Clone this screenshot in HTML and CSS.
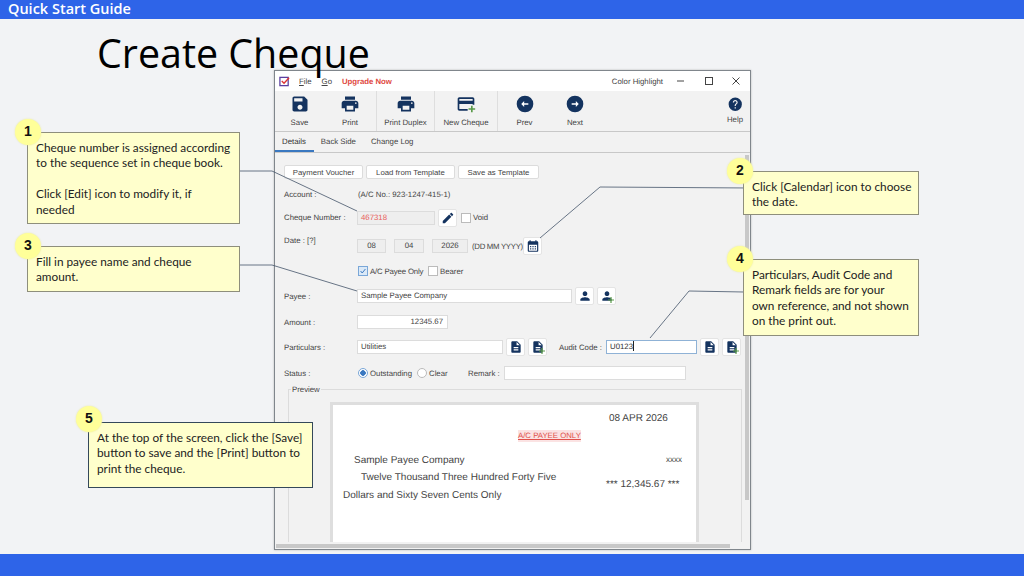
FILE: index.html
```html
<!DOCTYPE html>
<html lang="en">

<head>
    <meta charset="UTF-8">
    <title>Create Cheque</title>
    <link rel="stylesheet" href="styles.css">
</head>

<body>
<svg class="defs" width="0" height="0">
  <symbol id="i-save" viewBox="0 0 24 24"><path d="M17 3H5c-1.11 0-2 .9-2 2v14c0 1.1.89 2 2 2h14c1.1 0 2-.9 2-2V7l-4-4zm-5 16c-1.66 0-3-1.34-3-3s1.34-3 3-3 3 1.34 3 3-1.34 3-3 3zm3-10H5V5h10v4z"/></symbol>
  <symbol id="i-print" viewBox="0 0 24 24"><path d="M19 8H5c-1.66 0-3 1.34-3 3v6h4v4h12v-4h4v-6c0-1.66-1.34-3-3-3zm-3 11H8v-5h8v5zm3-7c-.55 0-1-.45-1-1s.45-1 1-1 1 .45 1 1-.45 1-1 1zm-1-9H6v4h12V3z"/></symbol>
  <symbol id="i-edit" viewBox="0 0 24 24"><path d="M3 17.25V21h3.75L17.81 9.94l-3.75-3.75L3 17.25zM20.71 7.04c.39-.39.39-1.02 0-1.41l-2.34-2.34c-.39-.39-1.02-.39-1.41 0l-1.83 1.83 3.75 3.75 1.83-1.83z"/></symbol>
  <symbol id="i-cal" viewBox="0 0 24 24"><path d="M19 4h-1V2h-2v2H8V2H6v2H5c-1.1 0-2 .9-2 2v14c0 1.1.9 2 2 2h14c1.1 0 2-.9 2-2V6c0-1.1-.9-2-2-2zm0 16H5V10h14v10zM7 12h2v2H7zm4 0h2v2h-2zm4 0h2v2h-2zm-8 4h2v2H7zm4 0h2v2h-2zm4 0h2v2h-2z"/></symbol>
  <symbol id="i-person" viewBox="0 0 24 24"><path d="M12 12c2.21 0 4-1.79 4-4s-1.79-4-4-4-4 1.79-4 4 1.79 4 4 4zm0 2c-2.67 0-8 1.34-8 4v2h16v-2c0-2.66-5.33-4-8-4z"/></symbol>
  <symbol id="i-doc" viewBox="0 0 24 24"><path d="M14 2H6c-1.1 0-1.99.9-1.99 2L4 20c0 1.1.89 2 1.99 2H18c1.1 0 2-.9 2-2V8l-6-6zm2 16H8v-2h8v2zm0-4H8v-2h8v2zm-3-5V3.5L18.5 9H13z"/></symbol>
  <symbol id="i-plus" viewBox="0 0 10 10"><path fill="#5a9a4a" d="M4 0h2v4h4v2H6v4H4V6H0V4h4z"/></symbol>
</svg>

<div class="slide">
  <div class="topBar">Quick Start Guide</div>
  <h1 class="slideTitle">Create Cheque</h1>

  <div class="window">
    <div class="titleBar">
      <svg class="logo" viewBox="0 0 12 12"><rect x="1" y="1.5" width="9" height="9" fill="none" stroke="#5b3fa0" stroke-width="1.4"/><path d="M3 5.5l2.5 2.5L11 2" fill="none" stroke="#d33" stroke-width="1.5"/></svg>
      <span class="menu"><u>F</u>ile</span>
      <span class="menu"><u>G</u>o</span>
      <span class="upgrade">Upgrade Now</span>
      <span class="highlight">Color Highlight</span>
      <svg class="winBtn" viewBox="0 0 10 10"><path d="M1 5h7" stroke="#444" fill="none"/></svg>
      <svg class="winBtn" viewBox="0 0 10 10"><rect x="1.5" y="1.5" width="7" height="7" stroke="#444" fill="none"/></svg>
      <svg class="winBtn" viewBox="0 0 10 10"><path d="M1.5 1.5l7 7M8.5 1.5l-7 7" stroke="#444" fill="none"/></svg>
    </div>

    <div class="toolbar">
      <div class="tool toolSave"><svg class="toolIcon"><use href="#i-save"/></svg>Save</div>
      <div class="tool toolPrint"><svg class="toolIcon"><use href="#i-print"/></svg>Print</div>
      <div class="tool toolDuplex"><svg class="toolIcon"><use href="#i-print"/></svg>Print Duplex</div>
      <div class="tool toolNew">
        <svg class="toolIcon" viewBox="0 0 24 24"><path d="M20 4H4c-1.11 0-1.99.89-1.99 2L2 18c0 1.11.89 2 2 2h10v-2H4v-6h16v1h2V6c0-1.11-.89-2-2-2zm0 4H4V6h16v2z"/><path fill="#5a9a4a" d="M18 14h2v3h3v2h-3v3h-2v-3h-3v-2h3z"/></svg>
        New Cheque
      </div>
      <div class="tool toolPrev">
        <svg class="toolIcon" viewBox="0 0 24 24"><circle cx="12" cy="12" r="10"/><path fill="#fff" d="M16 11h-5V8.500L7.500 12l3.500 3.500V13h5z"/></svg>
        Prev
      </div>
      <div class="tool toolNext">
        <svg class="toolIcon" viewBox="0 0 24 24"><circle cx="12" cy="12" r="10"/><path fill="#fff" d="M8 11h5V8.500l3.500 3.500-3.500 3.500V13H8z"/></svg>
        Next
      </div>
      <div class="tool toolHelp">
        <svg class="helpIcon" viewBox="0 0 24 24"><path d="M12 1a11 11 0 1 0 0 22 11 11 0 0 0 0-22zm1 18h-2v-2h2v2zm2.070-7.750l-.9.920C13.450 12.900 13 13.500 13 15h-2v-.5c0-1.100.450-2.100 1.170-2.830l1.240-1.260c.37-.36.590-.86.590-1.410 0-1.100-.9-2-2-2s-2 .9-2 2H8c0-2.210 1.790-4 4-4s4 1.790 4 4c0 .88-.36 1.680-.93 2.250z"/></svg>
        Help
      </div>
    </div>

    <div class="tabs">
      <span class="tab active">Details</span>
      <span class="tab">Back Side</span>
      <span class="tab">Change Log</span>
    </div>

    <div class="form">
      <div class="row rowBtns">
        <button class="btn btnPv">Payment Voucher</button>
        <button class="btn btnLoad">Load from Template</button>
        <button class="btn btnSave">Save as Template</button>
      </div>

      <div class="row">
        <label class="lbl">Account :</label>
        <span class="acct">(A/C No.: 923-1247-415-1)</span>
      </div>

      <div class="row">
        <label class="lbl">Cheque Number :</label>
        <span class="field readOnly chequeNo">467318</span>
        <span class="iconBtn editBtn"><svg><use href="#i-edit"/></svg></span>
        <span class="check voidCheck"></span><span>Void</span>
      </div>

      <div class="row">
        <label class="lbl lblTop">Date : [?]</label>
        <span class="field readOnly center dd">08</span>
        <span class="field readOnly center mm">04</span>
        <span class="field readOnly center yy">2026</span>
        <span class="dateHint">(DD MM YYYY)</span>
        <span class="iconBtn calBtn"><svg><use href="#i-cal"/></svg></span>
      </div>

      <div class="row rowOffset">
        <span class="check checked"><svg viewBox="0 0 10 10"><path d="M2 5l2 2.500L8 2.500" fill="none" stroke="#3a78c0" stroke-width="1.200"/></svg></span>
        <span class="payeeOnly">A/C Payee Only</span>
        <span class="check"></span><span>Bearer</span>
      </div>

      <div class="row">
        <label class="lbl">Payee :</label>
        <span class="field payee">Sample Payee Company</span>
        <span class="iconBtn firstBtn"><svg><use href="#i-person"/></svg></span>
        <span class="iconBtn"><svg><use href="#i-person"/></svg><svg class="plus"><use href="#i-plus"/></svg></span>
      </div>

      <div class="row">
        <label class="lbl">Amount :</label>
        <span class="field amount">12345.67</span>
      </div>

      <div class="row">
        <label class="lbl">Particulars :</label>
        <span class="field particulars">Utilities</span>
        <span class="iconBtn firstBtn"><svg><use href="#i-doc"/></svg></span>
        <span class="iconBtn"><svg><use href="#i-doc"/></svg><svg class="plus"><use href="#i-plus"/></svg></span>
        <span class="auditLbl">Audit Code :</span>
        <span class="field audit">U0123<i class="caret"></i></span>
        <span class="iconBtn firstBtn"><svg><use href="#i-doc"/></svg></span>
        <span class="iconBtn"><svg><use href="#i-doc"/></svg><svg class="plus"><use href="#i-plus"/></svg></span>
      </div>

      <div class="row">
        <label class="lbl">Status :</label>
        <span class="radio on"></span><span class="outstanding">Outstanding</span>
        <span class="radio"></span><span class="clear">Clear</span>
        <span class="remarkLbl">Remark :</span>
        <span class="field remark"></span>
      </div>
    </div>

    <div class="preview">
      <span class="legend">Preview</span>
      <div class="paper">
        <span class="pt ptDate">08 APR 2026</span>
        <span class="pt ptPayeeOnly">A/C PAYEE ONLY</span>
        <span class="pt ptPayee">Sample Payee Company</span>
        <span class="pt ptX">xxxx</span>
        <span class="pt ptWords1">Twelve Thousand Three Hundred Forty Five</span>
        <span class="pt ptAmount">*** 12,345.67 ***</span>
        <span class="pt ptWords2">Dollars and Sixty Seven Cents Only</span>
      </div>
    </div>

    <div class="scrollV"></div>
    <div class="scrollTrack"><div class="scrollH"></div></div>
  </div>

  <!-- connector lines from the notes to the fields -->
  <svg class="lines" viewBox="0 0 1024 576">
    <polyline points="240,171 272,171 357,211"/>
    <polyline points="751,188 600,187 540,238"/>
    <polyline points="240,265 272,265 357,291"/>
    <polyline points="744,292 689,291 650,338"/>
  </svg>

  <div class="note n1"><b class="badge">1</b>Cheque number is assigned according<br>to the sequence set in cheque book.<br><br>Click [Edit] icon to modify it, if<br>needed</div>
  <div class="note n2"><b class="badge">2</b>Click [Calendar] icon to choose<br>the date.</div>
  <div class="note n3"><b class="badge">3</b>Fill in payee name and cheque<br>amount.</div>
  <div class="note n4"><b class="badge">4</b>Particulars, Audit Code and<br>Remark fields are for your<br>own reference, and not shown<br>on the print out.</div>
  <div class="note n5"><b class="badge">5</b>At the top of the screen, click the [Save]<br>button to save and the [Print] button to<br>print the cheque.</div>

  <div class="bottomBar"></div>
</div>
</body>
</html>
```

FILE: styles.css
```css
body {
    margin: 0;
}

.defs {
    position: absolute;
}

.slide {
    position: relative;
    width: 1024px;
    height: 576px;
    overflow: hidden;
    background: #f2f3f5;
    display: flex;
    flex-direction: column;
    font-family: "Lato", sans-serif;
}

.topBar {
    height: 19px;
    background: #2e64e8;
    color: #fff;
    font-family: "Open Sans", sans-serif;
    font-weight: 600;
    font-size: 14.5px;
    line-height: 18px;
    padding-left: 8px;
}

.slideTitle {
    position: relative;
    z-index: 2;
    margin: 12px 0 0 97px;
    font-family: "Open Sans", sans-serif;
    font-weight: 400;
    font-size: 39.400px;
    line-height: 44px;
    color: #000;
}

.bottomBar {
    margin-top: auto;
    height: 22px;
    background: #2e64e8;
}

/* app window */
.window {
    position: absolute;
    left: 274px;
    top: 70px;
    width: 475px;
    height: 478px;
    border: 1px solid #80868c;
    background: #f2f2f2;
    overflow: hidden;
    display: flex;
    flex-direction: column;
    font-family: "Liberation Sans", Arial, sans-serif;
    font-size: 7.800px;
    text-rendering: geometricPrecision;
    color: #444;
    box-shadow: 0 0 2px rgba(0, 0, 0, .25);
}

.titleBar {
    height: 20px;
    flex: none;
    background: #fff;
    display: flex;
    align-items: center;
    padding: 0 9px 0 4px;
}

.logo {
    width: 11px;
    height: 11px;
    margin-right: 9px;
}

.menu {
    margin-right: 10px;
}

.upgrade {
    color: #e04a3f;
    font-weight: bold;
    letter-spacing: -.05px;
}

.highlight {
    margin-left: auto;
    margin-right: 13px;
}

.winBtn {
    width: 10px;
    height: 10px;
}

.winBtn + .winBtn {
    margin-left: 17.500px;
}

.toolbar {
    height: 40px;
    flex: none;
    display: flex;
    border-bottom: 1px solid #c8c8c8;
}

.tool {
    display: flex;
    flex-direction: column;
    align-items: center;
    padding-top: 3px;
    gap: 4px;
}

.toolIcon {
    width: 20px;
    height: 20px;
    fill: #14335f;
}

.toolSave {
    width: 49px;
}

.toolPrint {
    width: 52px;
    border-right: 1px solid #dedede;
}

.toolDuplex {
    width: 57px;
    border-right: 1px solid #dedede;
}

.toolNew {
    width: 62px;
    border-right: 1px solid #dedede;
}

.toolPrev {
    width: 53px;
}

.toolNext {
    width: 48px;
}

.toolHelp {
    margin-left: auto;
    width: 30px;
    padding-top: 6px;
    gap: 3px;
}

.helpIcon {
    width: 14.500px;
    height: 14.500px;
    fill: #14335f;
}

.tabs {
    height: 20px;
    flex: none;
    display: flex;
    border-bottom: 1px solid #c8c8c8;
}

.tab {
    padding: 5px 8px 0 7px;
}

.tab + .tab {
    padding-left: 7px;
}

.tab.active {
    border-bottom: 2px solid #3a78c0;
    height: 13px;
    color: #333;
}

.form {
    flex: none;
    margin-top: 7px;
    padding-left: 9px;
    display: grid;
    grid-template-rows: 24px 21px 25px 32px 18px 32px 20px 30px 22px;
}

.row {
    display: flex;
    align-items: center;
}

.rowBtns {
    gap: 3px;
}

.rowOffset {
    padding-left: 74px;
}

.btn {
    height: 14px;
    padding: 0;
    border: 1px solid #dcdcdc;
    border-radius: 2px;
    background: #fff;
    font: inherit;
    color: #444;
}

.btnPv {
    width: 79px;
}

.btnLoad {
    width: 89px;
}

.btnSave {
    width: 81px;
}

.lbl {
    width: 73px;
    flex: none;
}

.lblTop {
    align-self: flex-start;
    margin-top: 6px;
}

.acct {
    margin-left: 1px;
}

.field {
    box-sizing: border-box;
    height: 14px;
    line-height: 12px;
    padding: 0 3px;
    border: 1px solid #dcdcdc;
    background: #fff;
    color: #444;
    flex: none;
}

.readOnly {
    background: #eee;
}

.center {
    text-align: center;
    padding: 0;
}

.chequeNo {
    width: 78px;
    color: #e8605a;
}

.iconBtn {
    position: relative;
    box-sizing: border-box;
    width: 19px;
    height: 18px;
    flex: none;
    background: #fff;
    border: 1px solid #e4e4e4;
    border-radius: 2px;
    display: flex;
    align-items: center;
    justify-content: center;
    margin-left: 3px;
    fill: #14335f;
}

.iconBtn svg {
    width: 14px;
    height: 14px;
}

.iconBtn svg.plus {
    position: absolute;
    right: 1px;
    bottom: 1px;
    width: 6px;
    height: 6px;
}

.editBtn {
    margin-right: 4px;
}

.check {
    box-sizing: border-box;
    width: 10px;
    height: 10px;
    flex: none;
    background: #fff;
    border: 1px solid #bbb;
    margin-right: 2px;
}

.check svg {
    display: block;
    width: 8px;
    height: 8px;
}

.checked {
    border-color: #7aa7d8;
    background: #dbe9f7;
}

.payeeOnly {
    width: 52px;
    margin-right: 6px;
    white-space: nowrap;
    letter-spacing: -.15px;
}

.dd {
    width: 29px;
}

.mm {
    width: 30px;
    margin-left: 8px;
}

.yy {
    width: 36px;
    margin-left: 8px;
}

.dateHint {
    width: 48px;
    margin-left: 4px;
    white-space: nowrap;
    letter-spacing: -.3px;
}

.payee {
    width: 215px;
}

.amount {
    width: 91px;
    text-align: right;
    padding-right: 4px;
}

.particulars {
    width: 146px;
}

.auditLbl {
    width: 42px;
    margin-left: 12px;
    margin-right: 5px;
    white-space: nowrap;
}

.audit {
    width: 91px;
    border-color: #8fb2d6;
    color: #333;
}

.caret {
    display: inline-block;
    width: 1px;
    height: 10px;
    background: #222;
    vertical-align: -2px;
}

.radio {
    box-sizing: border-box;
    width: 10px;
    height: 10px;
    flex: none;
    border: 1px solid #bbb;
    border-radius: 50%;
    background: #fff;
    margin-right: 2px;
}

.radio.on {
    border: 1px solid #7aa7d8;
    background: radial-gradient(circle, #3a78c0 0 2.500px, #fff 3px);
    margin-left: 1px;
}

.outstanding {
    width: 47px;
}

.clear {
    width: 19px;
}

.remarkLbl {
    width: 32px;
    margin-left: 20px;
    margin-right: 4px;
    white-space: nowrap;
}

.remark {
    width: 182px;
}

.preview {
    position: relative;
    margin: 5px 0 0 13px;
    width: 454px;
    height: 200px;
    flex: none;
    box-sizing: border-box;
    border: 1px solid #dcdcdc;
}

.legend {
    position: absolute;
    left: 2px;
    top: -5px;
    padding: 0 1px;
    background: #f2f2f2;
    line-height: 9px;
}

.paper {
    position: absolute;
    left: 41px;
    top: 12px;
    width: 363px;
    height: 200px;
    background: #fff;
    border: 3px solid #dedede;
    font-size: 10px;
}

.pt {
    position: absolute;
    white-space: nowrap;
    color: #444;
    line-height: 12px;
}

.ptDate {
    left: 276px;
    top: 8px;
}

.ptPayeeOnly {
    left: 185px;
    top: 25px;
    font-size: 7.800px;
    color: #e0504a;
    background: #fbe3e3;
    text-decoration: underline;
}

.ptPayee {
    left: 21px;
    top: 50px;
}

.ptX {
    left: 333px;
    top: 49px;
    font-size: 8px;
}

.ptWords1 {
    left: 28px;
    top: 67px;
}

.ptAmount {
    left: 273px;
    top: 74px;
}

.ptWords2 {
    left: 10px;
    top: 85px;
}

.scrollV {
    position: absolute;
    right: 1px;
    top: 84px;
    width: 4px;
    height: 345px;
    background: #c8c8c8;
}

.scrollTrack {
    position: absolute;
    left: 0;
    right: 0;
    bottom: 0;
    height: 7px;
    background: #f2f2f2;
}

.scrollH {
    position: absolute;
    left: 1px;
    bottom: 1px;
    width: 454px;
    height: 4px;
    background: #c8c8c8;
}

/* notes and connectors */
.lines {
    position: absolute;
    left: 0;
    top: 0;
    width: 1024px;
    height: 576px;
    z-index: 3;
    fill: none;
    stroke: #44546a;
    stroke-width: .8;
}

.note {
    position: absolute;
    z-index: 4;
    box-sizing: border-box;
    padding: 7px 0 0 8px;
    background: #ffffcc;
    border: 1px solid #8e8e7c;
    color: #222;
    font-size: 11.800px;
    line-height: 15.400px;
    white-space: nowrap;
}

.badge {
    position: absolute;
    left: -13px;
    top: -14px;
    width: 26px;
    height: 26px;
    border-radius: 50%;
    background: #ffff99;
    box-shadow: 0 0 2px #e8e8a0;
    font-family: "Liberation Sans", Arial, sans-serif;
    font-size: 14px;
    line-height: 25px;
    text-align: center;
    color: #111;
}

.n1 {
    left: 27px;
    top: 132px;
    width: 213px;
    height: 92px;
}

.n2 {
    left: 743px;
    top: 171px;
    width: 176px;
    height: 44px;
}

.n3 {
    left: 27px;
    top: 246px;
    width: 213px;
    height: 46px;
}

.n4 {
    left: 743px;
    top: 259px;
    width: 176px;
    height: 77px;
}

.n5 {
    left: 88px;
    top: 422px;
    width: 225px;
    height: 66px;
    border-color: #34485a;
}

.n2 .badge,
.n4 .badge {
    left: -17px;
}

.n5 .badge {
    top: -17px;
}
```
